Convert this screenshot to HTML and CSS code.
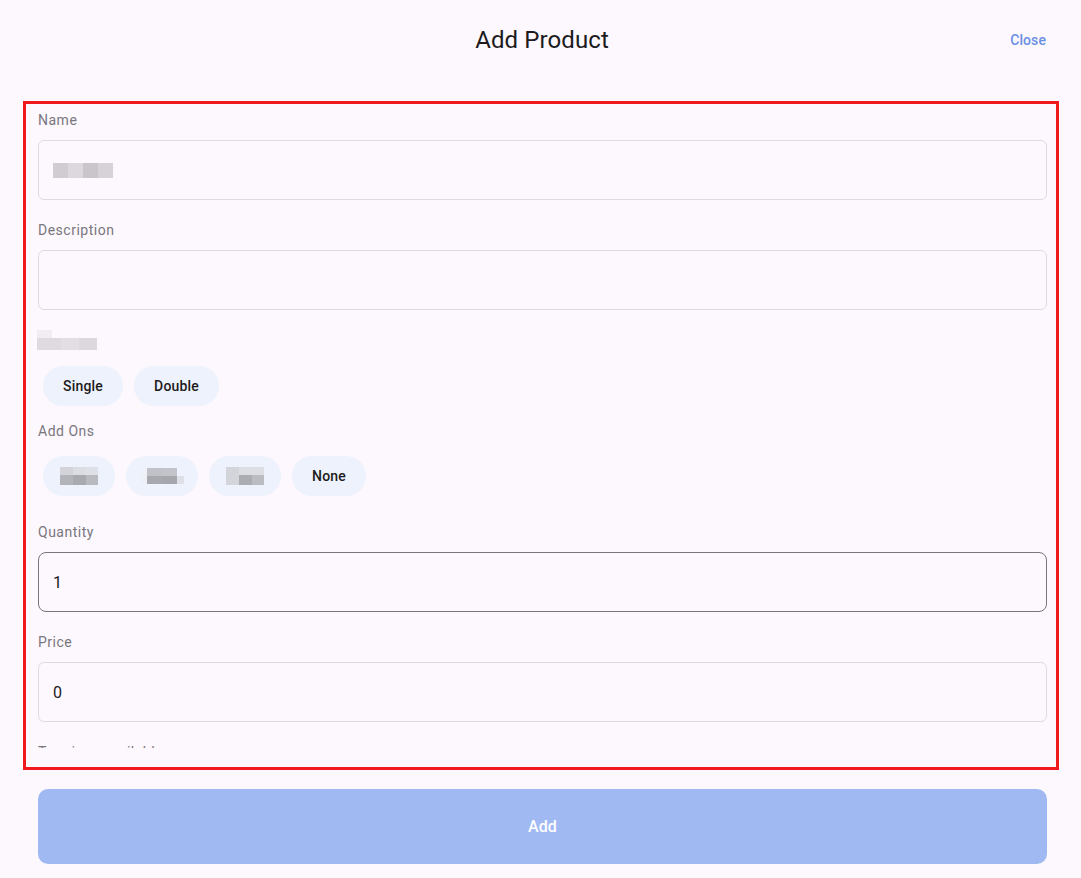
FILE: index.html
```html
<!DOCTYPE html>
<html lang="en">
<head>
<meta charset="utf-8">
<title>Add Product</title>
<link rel="stylesheet" href="styles.css">
</head>
<body>
<div class="page">
  <header class="header">
    <div class="spacer"></div>
    <h1 class="title">Add Product</h1>
    <a class="close" href="#">Close</a>
  </header>

  <section class="frame">
    <form class="form">
      <div class="field">
        <label class="label">Name</label>
        <div class="input">
          <span class="blob name-blob">
            <i class="c1"></i><i class="c2"></i><i class="c3"></i><i class="c4"></i>
          </span>
        </div>
      </div>

      <div class="field">
        <label class="label">Description</label>
        <div class="input"></div>
      </div>

      <div class="blur-label">
        <i class="bl-top"></i>
        <i class="bl-bar"></i>
      </div>

      <div class="chips chips-size">
        <span class="chip">Single</span>
        <span class="chip">Double</span>
      </div>

      <div class="label addons-label">Add Ons</div>

      <div class="chips chips-addons">
        <span class="chip chip-blur">
          <span class="pix pix-a">
            <i style="background:#d3d3d9"></i><i style="background:#dcdde2"></i><i style="background:#dde0e6"></i>
            <i style="background:#b3b3ba"></i><i style="background:#a9a9b0"></i><i style="background:#b9b9c0"></i>
          </span>
        </span>
        <span class="chip chip-blur">
          <span class="pix pix-b">
            <i style="background:#eef1f8"></i><i style="background:#c0c2c8"></i><i style="background:#c2c4ca"></i><i style="background:#edf2fc"></i>
            <i style="background:#edf0f7"></i><i style="background:#a8a9ae"></i><i style="background:#a6a7ac"></i><i style="background:#dde0e6"></i>
          </span>
        </span>
        <span class="chip chip-blur">
          <span class="pix pix-a">
            <i style="background:#d3d5db"></i><i style="background:#dcdee4"></i><i style="background:#dcdee4"></i>
            <i style="background:#d3d5db"></i><i style="background:#acadb3"></i><i style="background:#babcc2"></i>
          </span>
        </span>
        <span class="chip">None</span>
      </div>

      <div class="field field-qty">
        <label class="label">Quantity</label>
        <div class="input input-focus"><span class="value">1</span></div>
      </div>

      <div class="field">
        <label class="label">Price</label>
        <div class="input"><span class="value">0</span></div>
      </div>

      <div class="field">
        <label class="label">Toppings available</label>
      </div>
    </form>
  </section>

  <footer class="footer">
    <button class="add-btn" type="button">Add</button>
  </footer>
</div>
</body>
</html>
```

FILE: styles.css
```css
* { box-sizing: border-box; }

html, body {
  margin: 0;
  padding: 0;
  background: #fcf8fd;
}

body {
  font-family: Roboto, "Noto Sans", "Liberation Sans", sans-serif;
  color: #1d1b20;
}

.page {
  width: 1081px;
  height: 878px;
  display: flex;
  flex-direction: column;
  overflow: hidden;
}

.header {
  height: 80px;
  display: grid;
  grid-template-columns: 1fr auto 1fr;
  align-items: center;
  padding: 0 35px 0 38px;
}

.title {
  margin: 0;
  font-size: 24px;
  font-weight: 400;
  color: #1d1b20;
  letter-spacing: 0.1px;
}

.close {
  justify-self: end;
  font-size: 14px;
  font-weight: 500;
  color: #6a8fe6;
  text-decoration: none;
  letter-spacing: 0.1px;
}

.frame {
  margin: 21px 22px 0 23px;
  height: 669px;
  border: 3px solid #f01a1c;
}

.form {
  height: 644px;
  overflow: hidden;
  padding: 6px 9px 0 12px;
  display: flex;
  flex-direction: column;
}

.field {
  display: flex;
  flex-direction: column;
  margin-bottom: 20px;
}

.label {
  display: block;
  font-size: 14px;
  line-height: 20px;
  color: #79767d;
  letter-spacing: 0.5px;
  margin-bottom: 10px;
}

.input {
  height: 60px;
  border: 1px solid #dedbe1;
  border-radius: 6px;
  display: flex;
  align-items: center;
  padding-left: 14px;
}

.input-focus {
  border-color: #78757c;
  border-radius: 8px;
}

.value {
  font-size: 16px;
  color: #1d1b20;
}

.blob {
  display: flex;
  height: 15px;
}

.blob i {
  display: block;
  width: 15px;
  height: 15px;
}

.name-blob .c1 { background: #d0ccd2; }
.name-blob .c2 { background: #dcd8de; }
.name-blob .c3 { background: #c9c5cb; }
.name-blob .c4 { background: #d6d2d8; }

.blur-label {
  display: flex;
  flex-direction: column;
  margin-left: -1px;
  height: 20px;
}

.bl-top {
  display: block;
  width: 15px;
  height: 8px;
  background: #f1edf3;
}

.bl-bar {
  display: block;
  width: 60px;
  height: 12px;
  background: linear-gradient(90deg, #dedae0 0 40%, #e2dee4 40% 70%, #dcd8de 70%);
}

.chips {
  display: flex;
  gap: 11px;
  padding-left: 5px;
}

.chips-size {
  margin-top: 16px;
  margin-bottom: 15px;
}

.addons-label {
  margin-bottom: 15px;
}

.chips-addons {
  margin-bottom: 26px;
}

.chip {
  height: 40px;
  border-radius: 20px;
  background: #edf2fc;
  display: inline-flex;
  align-items: center;
  justify-content: center;
  padding: 0 20px;
  font-size: 14px;
  font-weight: 500;
  color: #1d1b20;
  letter-spacing: 0.2px;
}

.chip-blur {
  width: 72px;
  padding: 0;
}

.pix {
  display: grid;
}

.pix i { display: block; }

.pix-a {
  grid-template-columns: 13px 13px 12px;
  grid-template-rows: 8px 10px;
}

.pix-b {
  grid-template-columns: 6px 15px 15px 7px;
  grid-template-rows: 8px 8px;
}

.footer {
  padding: 19px 34px 0 38px;
}

.add-btn {
  width: 100%;
  height: 75px;
  border: 0;
  border-radius: 10px;
  background: #a1b9f3;
  color: #ffffff;
  font-family: Roboto, "Noto Sans", "Liberation Sans", sans-serif;
  font-size: 16px;
  font-weight: 500;
  letter-spacing: 0.1px;
}
```
